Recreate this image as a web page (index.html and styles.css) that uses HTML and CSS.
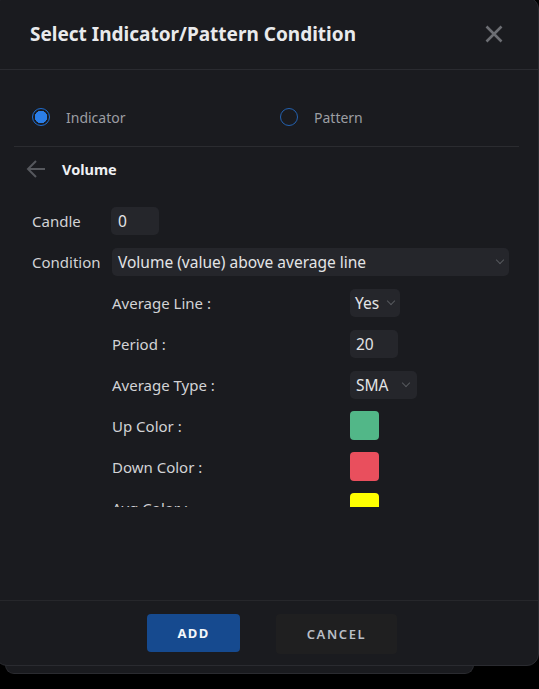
FILE: index.html
```html
<!DOCTYPE html>
<html>
<head>
<meta charset="utf-8">
<link rel="stylesheet" href="styles.css">
</head>
<body>
<div class="stage">
  <div class="dialog">
    <div class="header">
      <h2 class="title">Select Indicator/Pattern Condition</h2>
      <button class="close" aria-label="Close">
        <svg width="18" height="18" viewBox="0 0 18 18"><path d="M1.5 1.5 L16.5 16.5 M16.5 1.5 L1.5 16.5" stroke="#6c6e73" stroke-width="2.6" stroke-linecap="butt" fill="none"/></svg>
      </button>
    </div>
    <div class="body">
      <div class="type-row">
        <label class="radio"><span class="dot checked"></span><span class="radio-text">Indicator</span></label>
        <label class="radio"><span class="dot"></span><span class="radio-text">Pattern</span></label>
      </div>
      <div class="divider"></div>
      <div class="scroll">
        <div class="back-row">
          <svg class="back" width="20" height="20" viewBox="0 0 20 20"><path d="M19 10 H2 M10 2 L2 10 L10 18" stroke="#56585d" stroke-width="2" fill="none" stroke-linejoin="miter"/></svg>
          <span class="ind-name">Volume</span>
        </div>
        <div class="form">
          <div class="row">
            <span class="label">Candle</span>
            <div class="field candle">0</div>
          </div>
          <div class="row">
            <span class="label">Condition</span>
            <div class="field select wide"><span>Volume (value) above average line</span><span class="chev"></span></div>
          </div>
          <div class="sub-row">
            <span class="label">Average Line :</span>
            <div class="field select yes"><span>Yes</span><span class="chev"></span></div>
          </div>
          <div class="sub-row">
            <span class="label">Period :</span>
            <div class="field period">20</div>
          </div>
          <div class="sub-row">
            <span class="label">Average Type :</span>
            <div class="field select sma"><span>SMA</span><span class="chev"></span></div>
          </div>
          <div class="sub-row first-color">
            <span class="label">Up Color :</span>
            <div class="swatch green"></div>
          </div>
          <div class="sub-row">
            <span class="label">Down Color :</span>
            <div class="swatch red"></div>
          </div>
          <div class="sub-row">
            <span class="label">Avg Color :</span>
            <div class="swatch yellow"></div>
          </div>
        </div>
      </div>
    </div>
    <div class="footer">
      <button class="btn add">ADD</button>
      <button class="btn cancel">CANCEL</button>
    </div>
  </div>
  <div class="under"></div>
</div>
</body>
</html>
```
FILE: styles.css
```css
html, body {
  margin: 0;
  padding: 0;
  background: #000;
  height: 100%;
  overflow: hidden;
}
body {
  font-family: "Noto Sans", "Open Sans", sans-serif;
}
.stage {
  width: 539px;
  height: 689px;
}
.dialog {
  position: relative;
  z-index: 2;
  box-sizing: border-box;
  width: 544px;
  height: 669px;
  margin-top: -3px;
  margin-left: -5px;
  background: #1a1b1f;
  border: 1px solid #2a2b30;
  border-radius: 12px;
  display: flex;
  flex-direction: column;
}
.header {
  height: 71px;
  border-bottom: 1px solid #2a2b30;
  display: flex;
  align-items: center;
  justify-content: space-between;
  padding: 0 35px 0 34px;
  flex: none;
}
.title {
  margin: 0;
  padding-top: 1px;
  font-size: 19px;
  font-weight: 700;
  color: #e9eaec;
}
.close {
  background: none;
  border: 0;
  padding: 0;
  width: 18px;
  height: 18px;
  display: flex;
}
.body {
  flex: 1;
  display: flex;
  flex-direction: column;
}
.type-row {
  margin-top: 32px;
  height: 30px;
  display: grid;
  grid-template-columns: 248px auto;
  padding-left: 36px;
  align-items: center;
}
.radio {
  display: flex;
  align-items: center;
}
.dot {
  box-sizing: border-box;
  width: 18px;
  height: 18px;
  border-radius: 50%;
  border: 1.5px solid #2462b0;
  margin-right: 16px;
}
.dot.checked {
  border-color: #1f6dd0;
  background: radial-gradient(circle, #2b7ee8 0 6px, transparent 6.5px);
}
.radio-text {
  font-size: 14px;
  color: #9c9ea3;
}
.divider {
  margin: 14px 19px 0 18px;
  height: 1px;
  background: #2b2c30;
}
.scroll {
  height: 360px;
  overflow: hidden;
}
.back-row {
  margin-top: 7px;
  height: 30px;
  display: flex;
  align-items: center;
  padding-left: 30px;
}
.back {
  margin-right: 16px;
}
.ind-name {
  font-size: 14.5px;
  font-weight: 700;
  color: #eef0f3;
}
.form {
  margin-top: 23px;
  display: flex;
  flex-direction: column;
  gap: 13px;
}
.row, .sub-row {
  display: grid;
  height: 28px;
  align-items: center;
}
.row {
  grid-template-columns: 79px auto;
  padding-left: 36px;
}
.sub-row {
  grid-template-columns: 238px auto;
  padding-left: 116px;
}
.first-color {
  margin-top: -1px;
}
.label {
  font-size: 15px;
  line-height: 20px;
  color: #d2d3d6;
}
.field {
  box-sizing: border-box;
  height: 28px;
  background: #25262b;
  border-radius: 5px;
  font-size: 15.5px;
  color: #e3e4e6;
  display: flex;
  align-items: center;
  padding-left: 7px;
}
.candle { width: 48px; }
.period { width: 48px; padding-left: 6px; }
.select {
  justify-content: space-between;
  padding-right: 6px;
  padding-left: 6px;
}
.wide { width: 397px; margin-left: 1px; }
.yes { width: 50px; padding-left: 5px; }
.sma { width: 67px; padding-left: 6px; padding-right: 8px; }
.chev {
  width: 5px;
  height: 5px;
  border-right: 1.5px solid #56585d;
  border-bottom: 1.5px solid #56585d;
  transform: rotate(45deg);
  margin-top: -4px;
}
.swatch {
  width: 29px;
  height: 29px;
  border-radius: 4px;
}
.green { background: #52b788; }
.red { background: #e94f5d; }
.yellow { background: #ffff00; }
.footer {
  flex: none;
  height: 64px;
  border-top: 1px solid #26272b;
  display: flex;
  align-items: center;
  padding-left: 151px;
  gap: 36px;
}
.btn {
  border: 0;
  border-radius: 4px;
  font-family: "Noto Sans", "Open Sans", sans-serif;
  font-size: 13px;
  font-weight: 700;
  letter-spacing: 1.3px;
  padding: 0;
}
.add {
  width: 93px;
  height: 38px;
  background: #164a8f;
  color: #f4f6fa;
}
.cancel {
  width: 121px;
  height: 40px;
  background: #1f1f20;
  color: #b9bec6;
  font-weight: 600;
  letter-spacing: 1.6px;
  margin-top: 2px;
}
.under {
  position: relative;
  z-index: 1;
  box-sizing: border-box;
  margin-top: -12px;
  margin-left: 5px;
  width: 469px;
  height: 20px;
  background: #1a1b1f;
  border: 1px solid #2a2b30;
  border-top: 0;
  border-radius: 0 0 9px 9px;
}
```
